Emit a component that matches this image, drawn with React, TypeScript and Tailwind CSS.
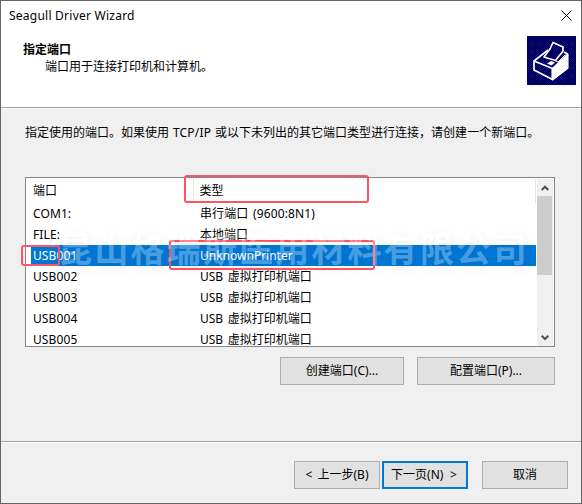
import type { ReactNode } from "react";

const ports = [
  ["COM1:", "串行端口 (9600:8N1)"],
  ["FILE:", "本地端口"],
  ["USB001", "UnknownPrinter"],
  ["USB002", "USB 虚拟打印机端口"],
  ["USB003", "USB 虚拟打印机端口"],
  ["USB004", "USB 虚拟打印机端口"],
  ["USB005", "USB 虚拟打印机端口"],
];

function PrinterIcon() {
  return (
    <svg className="h-[49px] w-[49px]" viewBox="0 0 49 49">
      <defs>
        <pattern id="dither" width="2" height="2" patternUnits="userSpaceOnUse">
          <rect width="2" height="2" fill="#000" />
          <rect width="1" height="1" fill="#0000c8" />
          <rect x="1" y="1" width="1" height="1" fill="#0000c8" />
        </pattern>
      </defs>
      <rect width="49" height="49" fill="url(#dither)" />
      <g stroke="#fff" strokeWidth="1.7" strokeLinejoin="round" fill="none">
        <path d="M21 14 7 25V34L25.500 43.500 40.500 32V18L37 16" />
        <path d="M7 25 25.500 32.500V43" />
        <path d="M25.500 32.500 40.500 18.500V32L25.500 43.500Z" fill="#fff" />
        <path d="M26 6.500 36 11V15L28.500 24.500 17 21 23 13Z" />
        <path d="M28 24.500 31 26 38.500 18.500" strokeWidth="1" />
      </g>
      <path d="M20 27.500 24 25 28 26.500 24.500 29.500Z" fill="#fff" />
    </svg>
  );
}

function Button({ className, children }: { className: string; children: ReactNode }) {
  return (
    <button
      className={`flex h-7 items-center justify-center whitespace-pre bg-[#e1e1e1] text-[12px] leading-4 ${className}`}
    >
      {children}
    </button>
  );
}

function Chevron({ down = false }: { down?: boolean }) {
  return (
    <svg className="h-[6px] w-[8px]" viewBox="0 0 8 6" fill="none" stroke="#505050" strokeWidth="2">
      <path d={down ? "M.7 .7 4 4 7.3 .7" : "M.7 5 4 1.7 7.3 5"} />
    </svg>
  );
}

export default function App() {
  return (
    <div className="relative flex h-[504px] w-[582px] flex-col overflow-hidden border border-[#666] bg-[#f0f0f0] font-['Noto_Sans','Noto_Sans_CJK_SC',sans-serif] text-[12px] leading-4 text-black">
      <header className="h-[106px] shrink-0 bg-white">
        <div className="flex h-[29px] items-center justify-between pl-2 pr-[9px]">
          <span className="text-[12px] tracking-[0.24px]">Seagull Driver Wizard</span>
          <svg className="h-[11px] w-[11px]" viewBox="0 0 11 11" stroke="#000">
            <path d="M.5 .5 10.5 10.5M10.5 .5 .5 10.5" />
          </svg>
        </div>
        <div className="flex justify-between pl-[22px] pr-[5px] pt-[6px]">
          <div className="pt-[6px]">
            <h1 className="font-bold leading-4">指定端口</h1>
            <p className="pl-[22px] pt-[1px] leading-4">端口用于连接打印机和计算机。</p>
          </div>
          <PrinterIcon />
        </div>
      </header>
      <div className="h-[2px] shrink-0 border-b border-t border-b-white border-t-[#a0a0a0]" />

      <main className="flex h-[332px] shrink-0 flex-col pl-6 pr-[26px] pt-[16px]">
        <p className="h-[52px] whitespace-nowrap leading-4 [word-spacing:0.8px]">
          指定使用的端口。如果使用 <span className="tracking-[0.2px]">TCP/IP</span> 或以下未列出的其它端口类型进行连接，请创建一个新端口。
        </p>
        <div className="flex h-[170px] w-[530px] shrink-0 overflow-hidden border border-[#828790] bg-white pt-px">
          <div className="w-[510px]">
            <div className="flex h-[24px] border-r border-[#e5e5e5]">
              <div className="flex w-[168px] items-center border-r border-[#e5e5e5] pl-[7px]">端口</div>
              <div className="flex items-center pl-[5.500px]">类型</div>
            </div>
            {ports.map(([name, type]) => (
              <div
                key={name}
                className={`ml-[5px] flex h-[21px] items-center whitespace-nowrap ${name === "USB001" ? "bg-[#0078d7] text-white" : ""}`}
              >
                <span className="w-[167px] pl-[2px] tracking-[0.1px]">{name}</span>
                <span className={`pl-[2px] [word-spacing:1.5px] ${name === "COM1:" ? "tracking-[0.1px]" : ""}`}>{type}</span>
              </div>
            ))}
          </div>
          <div className="ml-px flex h-[167px] w-4 flex-col items-center bg-[#f0f0f0]">
            <div className="flex h-[17px] items-center pt-px">
              <Chevron />
            </div>
            <div className="h-[79px] w-[15px] self-start bg-[#cdcdcd]" />
            <div className="mt-auto flex h-[16px] items-center">
              <Chevron down />
            </div>
          </div>
        </div>
        <div className="flex gap-[13px] pl-[255px] pt-[10px]">
          <Button className="w-[124px] border border-[#adadad]">创建端口(C)...</Button>
          <Button className="w-[138px] border border-[#adadad]">配置端口(P)...</Button>
        </div>
      </main>

      <div className="h-[2px] shrink-0 border-b border-t border-b-white border-t-[#a0a0a0]" />
      <footer className="flex justify-end pr-[13px] pt-[18px]">
        <Button className="w-[86px] border border-[#adadad] [word-spacing:2px]">&lt; 上一步(B)</Button>
        <Button className="ml-[2px] w-[86px] border-2 border-[#0078d7] pr-[2px] [word-spacing:3.500px]">下一页(N) &gt;</Button>
        <Button className="ml-[14px] w-[86px] border border-[#adadad]">取消</Button>
      </footer>

      <div className="pointer-events-none absolute left-[183px] top-[174px] h-[28px] w-[185px] rounded-[3px] border-2 border-[#ff5465]" />
      <div className="pointer-events-none absolute left-[20px] top-[244px] h-[21px] w-[39px] rounded-[3px] border-2 border-[#ff5465]" />
      <div className="pointer-events-none absolute left-[168px] top-[239px] h-[30px] w-[206px] rounded-[3px] border-2 border-[#ff5465]" />
      <div className="pointer-events-none absolute left-[57px] top-[227px] whitespace-nowrap font-['Noto_Sans_CJK_SC',sans-serif] text-[34px] font-bold leading-[40px] tracking-[2.2px] text-white opacity-[0.28] [text-shadow:1px_4px_8px_rgba(0,0,0,0.3)]">
        昆山格瑞斯医用材料有限公司
      </div>
    </div>
  );
}
